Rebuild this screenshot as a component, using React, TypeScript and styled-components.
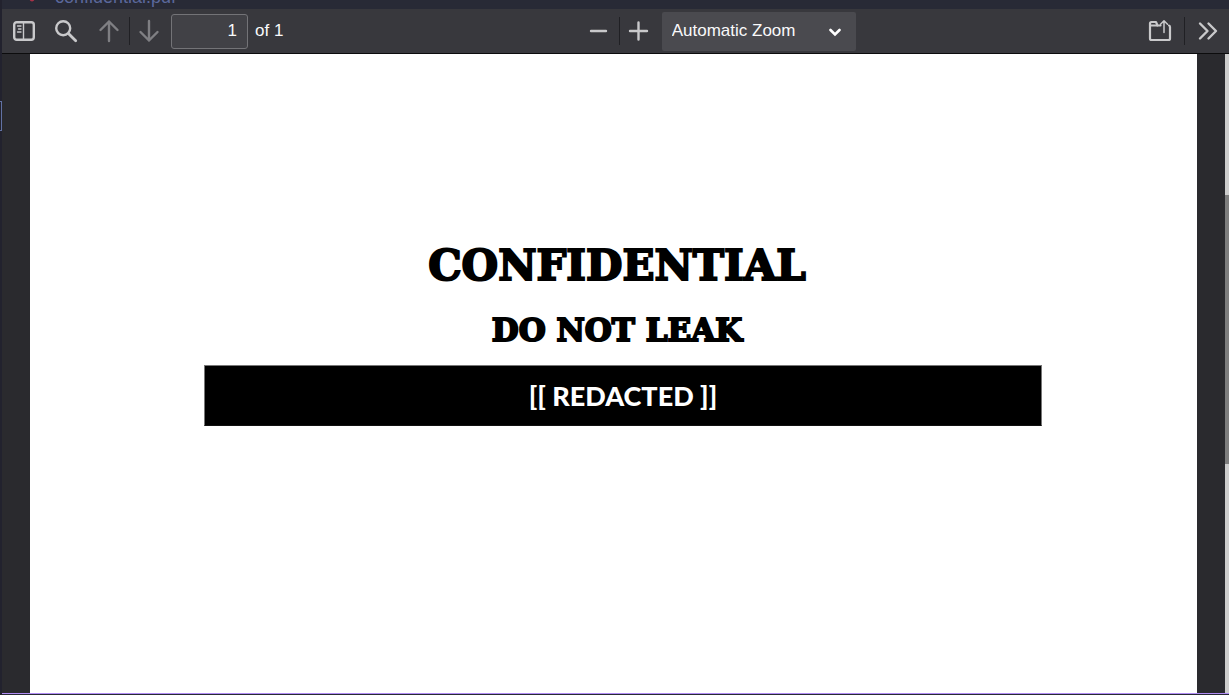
import React from "react";
import styled, { createGlobalStyle } from "styled-components";

const GlobalStyle = createGlobalStyle`
  * { box-sizing: border-box; }
  body { margin: 0; background: #23232e; }
`;

const Viewer = styled.div`
  position: relative;
  display: flex;
  flex-direction: column;
  height: 100vh;
  border-left: 2px solid #22222e;
  background: #2a2a2e;
  font-family: "Liberation Sans", Arial, sans-serif;
  font-size: 17px;
  color: #f9f9fa;
`;

const TabStrip = styled.header`
  display: flex;
  align-items: flex-end;
  flex: none;
  height: 9px;
  padding-left: 24px;
  gap: 18px;
  overflow: hidden;
  background: #282a36;
`;

const TabMark = styled.svg`
  flex: none;
  width: 11px;
  height: 9px;
`;

const TabTitle = styled.span`
  font-size: 18px;
  line-height: 20px;
  margin-bottom: 2px;
  color: #5b689c;
`;

const Toolbar = styled.div`
  display: grid;
  grid-template-columns: 47% auto 1fr;
  flex: none;
  height: 45px;
  border-bottom: 1px solid #0c0c0d;
  background: #38383d;
`;

const Group = styled.div<{ $end?: boolean }>`
  display: flex;
  align-items: center;
  justify-content: ${(p) => (p.$end ? "flex-end" : "flex-start")};
  padding: ${(p) => (p.$end ? "0 1px 0 0" : "0 0 0 2px")};
`;

const ZoomGroup = styled(Group)`
  padding: 0;
`;

const ToolButton = styled.button<{ $gap?: number; $wide?: boolean }>`
  display: grid;
  place-items: center;
  flex: none;
  width: ${(p) => (p.$wide ? 44 : 40)}px;
  height: 36px;
  margin: 0 ${(p) => p.$gap ?? 0}px 0 0;
  padding: 0;
  border: 0;
  background: none;
  color: #c9c9cb;
  &:disabled { color: #7f7f83; }
`;

const Icon = styled.svg`
  width: 24px;
  height: 24px;
  fill: none;
  stroke: currentColor;
  stroke-width: 2.4;
  stroke-linecap: round;
  stroke-linejoin: round;
`;

const Separator = styled.span`
  flex: none;
  width: 1px;
  height: 28px;
  margin-right: -1px;
  background: #202024;
`;

const PageInput = styled.input`
  width: 77px;
  height: 35px;
  margin: 0 7px 0 2px;
  padding: 0 10px;
  border: 1px solid #737377;
  border-radius: 3px;
  background: #414146;
  color: inherit;
  font: inherit;
  text-align: right;
`;

const SelectBox = styled.div`
  position: relative;
  margin-left: 3px;
`;

const ZoomSelect = styled.select`
  display: block;
  appearance: none;
  width: 194px;
  height: 39px;
  padding: 0 36px 2px 10px;
  border: 0;
  border-radius: 2px;
  background: #4a4a4f;
  color: inherit;
  font: inherit;
`;

const Chevron = styled.svg`
  position: absolute;
  right: 15px;
  top: 16px;
  width: 12px;
  height: 9px;
  fill: none;
  stroke: #fff;
  stroke-width: 2.6;
  stroke-linecap: round;
  pointer-events: none;
`;

const Scroller = styled.main`
  display: flex;
  flex: 1;
  min-height: 0;
  padding-left: 28px;
`;

const Page = styled.article`
  flex: 1;
  padding: 187px 155px 0 174px;
  background: #fff;
  color: #000;
  text-align: center;
`;

const Title = styled.h1`
  margin: 0;
  padding-right: 12px;
  font: bold 42px/50px "Cooper Black", "DejaVu Serif", serif;
  -webkit-text-stroke: 2px #000;
`;

const Subtitle = styled.h2`
  margin: 14px 0 0;
  padding-right: 12px;
  font: bold 31px/50px "Cooper Black", "DejaVu Serif", serif;
  -webkit-text-stroke: 2px #000;
`;

const Redaction = styled.p`
  margin: 10px 0 0;
  border: 1px solid #777;
  border-bottom-color: #111;
  background: #000;
  color: #fff;
  font: 900 27px/59px Lato, sans-serif;
`;

const ScrollTrack = styled.div`
  flex: none;
  width: 4px;
  margin-left: 28px;
  padding-top: 141px;
  background: #cdcdcd;
`;

const ScrollThumb = styled.div`
  height: 54%;
  background: #7e7e7e;
`;

const BottomEdge = styled.footer`
  flex: none;
  height: 2px;
  border-top: 1px solid #b18cf5;
  background: #282a36;
`;

const EdgeMarker = styled.span`
  position: absolute;
  left: -2px;
  top: 101px;
  width: 2px;
  height: 30px;
  border: 1px solid #6272a4;
  border-left: 0;
`;

export default function App() {
  return (
    <>
      <GlobalStyle />
      <Viewer>
        <TabStrip>
          <TabMark viewBox="0 0 11 9">
            <circle cx="6" cy="-1" r="2.4" fill="#a83248" />
          </TabMark>
          <TabTitle>confidential.pdf</TabTitle>
        </TabStrip>
        <Toolbar>
          <Group>
            <ToolButton aria-label="Toggle sidebar" $gap={2}>
              <Icon viewBox="0 0 24 24">
                <rect x="2.2" y="3.2" width="19.6" height="17.6" rx="2.5" />
                <path d="M11.5 4v16" strokeWidth="1.4" />
                <path d="M5.5 7h3.5M6.5 10h2.5M5.5 13h3.5" strokeWidth="1.3" />
              </Icon>
            </ToolButton>
            <ToolButton aria-label="Find" $gap={3}>
              <Icon viewBox="0 0 24 24">
                <circle cx="9.2" cy="9.2" r="7" />
                <path d="M14.7 14.7l7 7" strokeWidth="2.8" />
              </Icon>
            </ToolButton>
            <ToolButton aria-label="Previous page" disabled>
              <Icon viewBox="0 0 24 24">
                <path d="M12 22V2.5M3.5 11L12 2.5l8.5 8.5" />
              </Icon>
            </ToolButton>
            <Separator />
            <ToolButton aria-label="Next page" disabled>
              <Icon viewBox="0 0 24 24">
                <path d="M12 2v19.5M3.5 13l8.5 8.5 8.5-8.5" />
              </Icon>
            </ToolButton>
            <PageInput aria-label="Page" defaultValue="1" />
            <span>of 1</span>
          </Group>
          <ZoomGroup>
            <ToolButton aria-label="Zoom out">
              <Icon viewBox="0 0 24 24">
                <path d="M4 12h15" />
              </Icon>
            </ToolButton>
            <Separator />
            <ToolButton aria-label="Zoom in">
              <Icon viewBox="0 0 24 24">
                <path d="M3 12h17M11.5 3.5v17" />
              </Icon>
            </ToolButton>
            <SelectBox>
              <ZoomSelect aria-label="Zoom">
                <option>Automatic Zoom</option>
              </ZoomSelect>
              <Chevron viewBox="0 0 12 9">
                <path d="M1.5 2L6 6.5 10.5 2" />
              </Chevron>
            </SelectBox>
          </ZoomGroup>
          <Group $end>
            <ToolButton aria-label="Open file" $gap={4}>
              <Icon viewBox="0 0 24 24">
                <path
                  d="M12.5 6.5H9.5L8 3H3.5Q2 3 2 4.5V19.5Q2 21 3.5 21H20.5Q22 21 22 19.5V8Q22 6.5 21 6.5"
                  strokeWidth="2.2"
                />
                <path d="M2.5 6.5h7" strokeWidth="1.8" />
                <path d="M16 13.5V2M12.5 5.3L16 1.8l3.5 3.5" strokeWidth="1.5" />
              </Icon>
            </ToolButton>
            <Separator />
            <ToolButton aria-label="Tools" $wide>
              <Icon viewBox="0 0 24 24">
                <path d="M6 4.5l7.5 7.5L6 19.5M14.500 4.5l7.5 7.5-7.5 7.5" />
              </Icon>
            </ToolButton>
          </Group>
        </Toolbar>
        <Scroller>
          <Page>
            <Title>CONFIDENTIAL</Title>
            <Subtitle>DO NOT LEAK</Subtitle>
            <Redaction>[[ REDACTED ]]</Redaction>
          </Page>
          <ScrollTrack>
            <ScrollThumb />
          </ScrollTrack>
        </Scroller>
        <BottomEdge />
        <EdgeMarker />
      </Viewer>
    </>
  );
}
